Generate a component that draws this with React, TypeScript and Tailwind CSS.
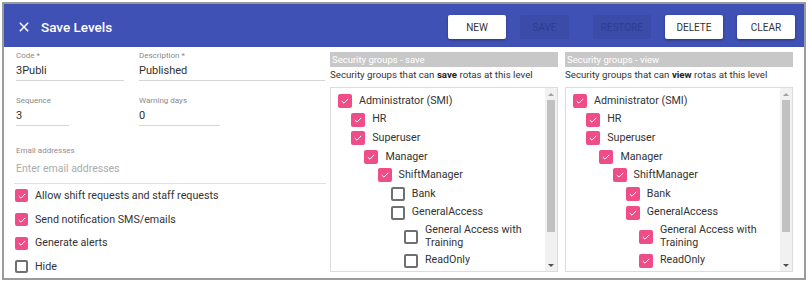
import React from 'react';

type Group = { name: string; depth: number };

const groups: Group[] = [
  { name: 'Administrator (SMI)', depth: 0 },
  { name: 'HR', depth: 1 },
  { name: 'Superuser', depth: 1 },
  { name: 'Manager', depth: 2 },
  { name: 'ShiftManager', depth: 3 },
  { name: 'Bank', depth: 4 },
  { name: 'GeneralAccess', depth: 4 },
  { name: 'General Access with Training', depth: 5 },
  { name: 'ReadOnly', depth: 5 },
];

const Check: React.FC<{ checked: boolean; size?: string }> = ({ checked, size = 'w-[14px] h-[14px]' }) =>
  checked ? (
    <span className={`${size} shrink-0 rounded-[2px] bg-[#ef4d88] flex items-center justify-center`}>
      <svg viewBox="0 0 14 14" className="w-[10px] h-[10px]">
        <polyline points="2.5,7.2 5.6,10 11.5,4" fill="none" stroke="white" strokeWidth="1.4" />
      </svg>
    </span>
  ) : (
    <span className={`${size} shrink-0 rounded-[2px] border-2 border-[#707070] bg-white`}></span>
  );

const Field: React.FC<{ label: string; value: string; width: string }> = ({ label, value, width }) => (
  <div className={`${width} border-b border-[#d6d6d6] pb-[2px]`}>
    <div className="text-[8px] leading-[10px] text-[#8a8a8a]">{label}</div>
    <div className="mt-[3px] text-[11px] leading-[14px] text-[#303030]">{value}</div>
  </div>
);

const GroupPanel: React.FC<{ title: string; verb: string; checkedCount: number }> = ({ title, verb, checkedCount }) => (
  <div className="w-[228px] pt-[5px]">
    <div className="h-[15px] bg-[#c8c8c8] pl-[2px] text-[9.5px] leading-[15px] text-white">{title}</div>
    <div className="mt-[1px] text-[9.7px] leading-[14px] text-[#333]">
      Security groups that can <b className="font-bold text-[#222]">{verb}</b> rotas at this level
    </div>
    <div className="mt-[5px] h-[185px] border border-[#dcdcdc] flex overflow-hidden">
      <div className="flex-1 pl-[7px] pt-[3.7px] pr-[12px]">
        {groups.map((g, i) => (
          <div
            key={g.name}
            className="flex items-center gap-[7px] py-[2.3px]"
            style={{ paddingLeft: g.depth * 13.2 }}
          >
            <Check checked={i < checkedCount} />
            <span className="text-[10.7px] leading-[12.5px] text-[#333]">{g.name}</span>
          </div>
        ))}
      </div>
      <div className="w-[12px] bg-[#f1f1f1] flex flex-col items-center">
        <div className="h-[12px] flex items-center justify-center">
          <span className="w-0 h-0 border-l-[3px] border-r-[3px] border-b-[3px] border-l-transparent border-r-transparent border-b-[#a3a3a3]"></span>
        </div>
        <div className="w-[8px] h-[132px] bg-[#c1c1c1]"></div>
        <div className="flex-1"></div>
        <div className="h-[12px] flex items-center justify-center">
          <span className="w-0 h-0 border-l-[3px] border-r-[3px] border-t-[3px] border-l-transparent border-r-transparent border-t-[#505050]"></span>
        </div>
      </div>
    </div>
  </div>
);

export default function App() {
  const options = [
    { label: 'Allow shift requests and staff requests', checked: true },
    { label: 'Send notification SMS/emails', checked: true },
    { label: 'Generate alerts', checked: true },
    { label: 'Hide', checked: false },
  ];

  return (
    <div className="w-[808px] h-[283px] bg-white pt-[2px] pl-[2px]" style={{ fontFamily: 'Roboto, "Liberation Sans", sans-serif' }}>
      <div className="w-[804px] h-[278px] border-2 border-[#9b9b9b] overflow-hidden flex flex-col">
        {/* Header */}
        <div className="h-[43px] shrink-0 bg-[#3f51b5] flex items-center pt-[3px] pl-[15px] pr-[9px]">
          <svg viewBox="0 0 10 10" className="w-[10px] h-[10px]">
            <path d="M0.8 0.8 L9.2 9.2 M9.2 0.8 L0.8 9.2" stroke="white" strokeWidth="1.5" />
          </svg>
          <span className="ml-[12px] text-[13.5px] font-medium text-white">Save Levels</span>
          <div className="flex-1"></div>
          <button className="w-[58px] h-[24px] rounded-[2px] bg-white text-[10px] text-[#333] shadow-[0_1px_3px_rgba(0,0,0,0.35)]">NEW</button>
          <button className="ml-[14px] w-[49px] h-[24px] rounded-[2px] bg-[#3a4ba8] text-[10px] text-[#2e3d92]">SAVE</button>
          <button className="ml-[24px] w-[58px] h-[24px] rounded-[2px] bg-[#3a4ba8] text-[10px] text-[#2e3d92]">RESTORE</button>
          <button className="ml-[14px] w-[58px] h-[24px] rounded-[2px] bg-white text-[10px] text-[#333] shadow-[0_1px_3px_rgba(0,0,0,0.35)]">DELETE</button>
          <button className="ml-[14px] w-[58px] h-[24px] rounded-[2px] bg-white text-[10px] text-[#333] shadow-[0_1px_3px_rgba(0,0,0,0.35)]">CLEAR</button>
        </div>

        {/* Body */}
        <div className="flex flex-1">
          <div className="w-[322px] pl-[12px] pt-[4px]">
            <div className="flex gap-[15px]">
              <Field label="Code *" value="3Publi" width="w-[108px]" />
              <Field label="Description *" value="Published" width="w-[186px]" />
            </div>
            <div className="flex gap-[70px] mt-[15px]">
              <Field label="Sequence" value="3" width="w-[53px]" />
              <Field label="Warning days" value="0" width="w-[81px]" />
            </div>
            <div className="-ml-[2px] mt-[20px] border-b border-[#e0e0e0] pl-[2px] pb-[7px]">
              <div className="text-[8px] leading-[10px] text-[#968a90]">Email addresses</div>
              <div className="mt-[6px] text-[10.5px] leading-[14px] text-[#ababab]">Enter email addresses</div>
            </div>
            <div className="-ml-[1px]">
              {options.map((o) => (
                <div key={o.label} className="h-[23.7px] flex items-center gap-[7px]">
                  <Check checked={o.checked} size="w-[13px] h-[13px]" />
                  <span className="text-[10.7px] text-[#333]">{o.label}</span>
                </div>
              ))}
            </div>
          </div>
          <div className="ml-[4px]">
            <GroupPanel title="Security groups - save" verb="save" checkedCount={5} />
          </div>
          <div className="ml-[7px]">
            <GroupPanel title="Security groups - view" verb="view" checkedCount={9} />
          </div>
        </div>
      </div>
    </div>
  );
}
